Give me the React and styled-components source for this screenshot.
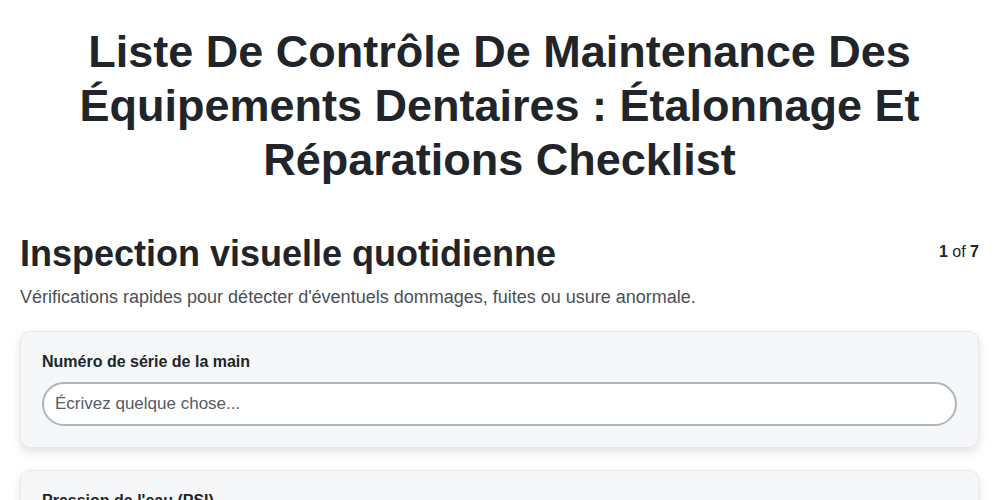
import React from 'react';
import styled, { createGlobalStyle } from 'styled-components';

const GlobalStyle = createGlobalStyle`
  body {
    margin: 0;
    background: #ffffff;
    font-family: "Liberation Sans", Arial, sans-serif;
    color: #212529;
  }
`;

const Page = styled.div`
  padding: 25px 21px 0 20px;
`;

const Title = styled.h1`
  margin: 0 auto;
  max-width: 880px;
  text-align: center;
  font-size: 45px;
  line-height: 54px;
  font-weight: 700;
  color: #212529;
`;

const SectionHeader = styled.div`
  display: flex;
  justify-content: space-between;
  align-items: flex-start;
  margin-top: 45px;
`;

const SectionTitle = styled.h2`
  margin: 0;
  font-size: 36px;
  line-height: 44px;
  font-weight: 700;
`;

const Counter = styled.div`
  font-size: 16px;
  line-height: 20px;
  margin-top: 10px;
  color: #212529;

  b {
    font-weight: 700;
  }
`;

const Description = styled.p`
  margin: 9px 0 0;
  font-size: 18px;
  line-height: 24px;
  color: #495057;
`;

const Card = styled.div`
  margin-top: 22px;
  background: #f6f7f9;
  border: 1px solid #e6e8ec;
  border-radius: 10px;
  padding: 20px 21px 21px 21px;
  box-shadow: 0 4px 10px rgba(0, 0, 0, 0.12);
`;

const Label = styled.label`
  display: block;
  font-size: 16px;
  font-weight: 700;
  line-height: 20px;
  margin-bottom: 10px;
  color: #212529;
`;

const Input = styled.input`
  box-sizing: border-box;
  width: 100%;
  height: 44px;
  border: 2px solid #adb5bd;
  border-radius: 22px;
  padding: 0 11px;
  font-family: "Liberation Sans", Arial, sans-serif;
  font-size: 17px;
  background: #ffffff;
  outline: none;

  &::placeholder {
    color: #555b63;
  }
`;

const fields = ['Numéro de série de la main', "Pression de l'eau (PSI)"];

export default function App() {
  return (
    <>
      <GlobalStyle />
      <Page>
        <Title>
          Liste De Contrôle De Maintenance Des Équipements Dentaires : Étalonnage Et Réparations Checklist
        </Title>
        <SectionHeader>
          <SectionTitle>Inspection visuelle quotidienne</SectionTitle>
          <Counter>
            <b>1</b> of <b>7</b>
          </Counter>
        </SectionHeader>
        <Description>
          Vérifications rapides pour détecter d'éventuels dommages, fuites ou usure anormale.
        </Description>
        {fields.map((f) => (
          <Card key={f}>
            <Label>{f}</Label>
            <Input placeholder="Écrivez quelque chose..." />
          </Card>
        ))}
      </Page>
    </>
  );
}
